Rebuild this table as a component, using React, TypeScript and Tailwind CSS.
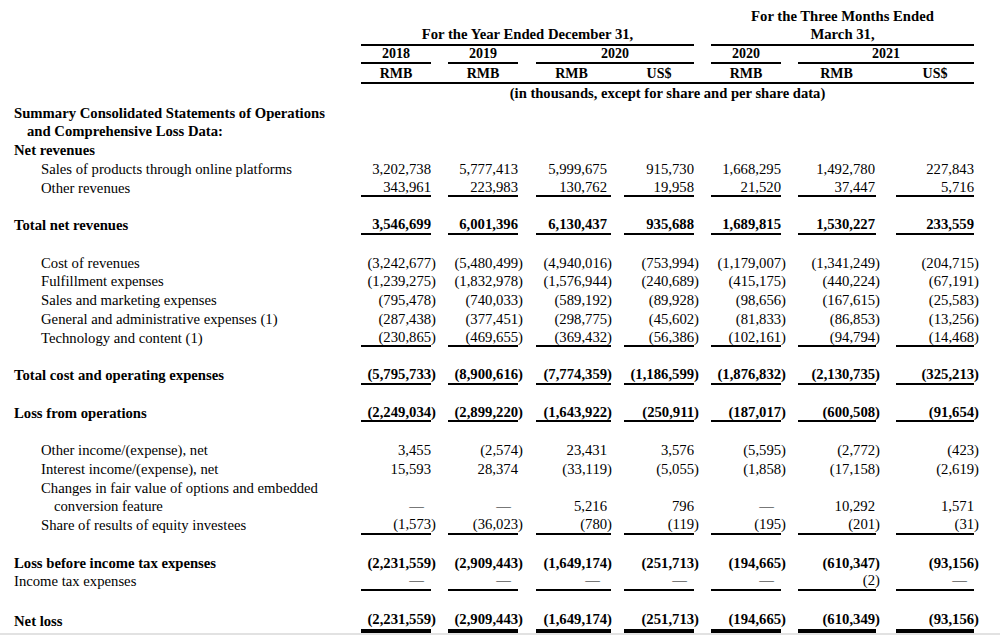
import React from "react";

type Row = {
  label: string;
  indent?: 0 | 1 | 2 | 3;
  bold?: boolean;
  values?: string[];
  line?: "single" | "thick";
};

// column widths / gaps measured off the underlines
const COLS = [
  "ml-0 w-[70px]",
  "ml-[17px] w-[70px]",
  "ml-[18px] w-[75px] pr-[4px]",
  "ml-[13px] w-[70px]",
  "ml-[17px] w-[70px]",
  "ml-[17px] w-[78px] pr-[1px]",
  "ml-[20px] w-[78px]",
];

const INDENT = ["pl-[14px]", "pl-[27px]", "pl-[41px]", "pl-[54px]"];

const ROWS: Row[] = [
  { label: "Summary Consolidated Statements of Operations", bold: true },
  { label: "and Comprehensive Loss Data:", indent: 1, bold: true },
  { label: "Net revenues", bold: true },
  {
    label: "Sales of products through online platforms",
    indent: 2,
    values: ["3,202,738", "5,777,413", "5,999,675", "915,730", "1,668,295", "1,492,780", "227,843"],
  },
  {
    label: "Other revenues",
    indent: 2,
    values: ["343,961", "223,983", "130,762", "19,958", "21,520", "37,447", "5,716"],
    line: "single",
  },
  { label: "" },
  {
    label: "Total net revenues",
    bold: true,
    values: ["3,546,699", "6,001,396", "6,130,437", "935,688", "1,689,815", "1,530,227", "233,559"],
    line: "single",
  },
  { label: "" },
  {
    label: "Cost of revenues",
    indent: 2,
    values: ["(3,242,677)", "(5,480,499)", "(4,940,016)", "(753,994)", "(1,179,007)", "(1,341,249)", "(204,715)"],
  },
  {
    label: "Fulfillment expenses",
    indent: 2,
    values: ["(1,239,275)", "(1,832,978)", "(1,576,944)", "(240,689)", "(415,175)", "(440,224)", "(67,191)"],
  },
  {
    label: "Sales and marketing expenses",
    indent: 2,
    values: ["(795,478)", "(740,033)", "(589,192)", "(89,928)", "(98,656)", "(167,615)", "(25,583)"],
  },
  {
    label: "General and administrative expenses (1)",
    indent: 2,
    values: ["(287,438)", "(377,451)", "(298,775)", "(45,602)", "(81,833)", "(86,853)", "(13,256)"],
  },
  {
    label: "Technology and content (1)",
    indent: 2,
    values: ["(230,865)", "(469,655)", "(369,432)", "(56,386)", "(102,161)", "(94,794)", "(14,468)"],
    line: "single",
  },
  { label: "" },
  {
    label: "Total cost and operating expenses",
    bold: true,
    values: ["(5,795,733)", "(8,900,616)", "(7,774,359)", "(1,186,599)", "(1,876,832)", "(2,130,735)", "(325,213)"],
    line: "single",
  },
  { label: "" },
  {
    label: "Loss from operations",
    bold: true,
    values: ["(2,249,034)", "(2,899,220)", "(1,643,922)", "(250,911)", "(187,017)", "(600,508)", "(91,654)"],
    line: "single",
  },
  { label: "" },
  {
    label: "Other income/(expense), net",
    indent: 2,
    values: ["3,455", "(2,574)", "23,431", "3,576", "(5,595)", "(2,772)", "(423)"],
  },
  {
    label: "Interest income/(expense), net",
    indent: 2,
    values: ["15,593", "28,374", "(33,119)", "(5,055)", "(1,858)", "(17,158)", "(2,619)"],
  },
  { label: "Changes in fair value of options and embedded", indent: 2 },
  {
    label: "conversion feature",
    indent: 3,
    values: ["—", "—", "5,216", "796", "—", "10,292", "1,571"],
  },
  {
    label: "Share of results of equity investees",
    indent: 2,
    values: ["(1,573)", "(36,023)", "(780)", "(119)", "(195)", "(201)", "(31)"],
    line: "single",
  },
  { label: "" },
  {
    label: "Loss before income tax expenses",
    bold: true,
    values: ["(2,231,559)", "(2,909,443)", "(1,649,174)", "(251,713)", "(194,665)", "(610,347)", "(93,156)"],
  },
  {
    label: "Income tax expenses",
    values: ["—", "—", "—", "—", "—", "(2)", "—"],
    line: "single",
  },
  { label: "" },
  {
    label: "Net loss",
    bold: true,
    values: ["(2,231,559)", "(2,909,443)", "(1,649,174)", "(251,713)", "(194,665)", "(610,349)", "(93,156)"],
    line: "thick",
  },
];

function Amount({ v }: { v: string }) {
  if (v === "—") return <span className="mr-[7px]">—</span>;
  if (v.startsWith("(")) {
    return (
      <span>
        {v.slice(0, -1)}
        <span className="-mr-[5px]">)</span>
      </span>
    );
  }
  return <span>{v}</span>;
}

function BodyRow({ row }: { row: Row }) {
  const h = row.line === "thick" ? "h-[23.5px]" : "h-[18.75px]";
  const border =
    row.line === "thick" ? "border-b-[4px] border-black" : row.line === "single" ? "border-b-2 border-black" : "";
  return (
    <div className={`flex ${h} ${row.bold ? "font-bold" : ""}`}>
      <div className={`flex w-[361px] shrink-0 items-center whitespace-nowrap ${INDENT[row.indent ?? 0]}`}>
        {row.label}
      </div>
      {row.values &&
        row.values.map((v, i) => (
          <div
            key={i}
            className={`box-border flex h-full shrink-0 items-center justify-end whitespace-nowrap ${COLS[i]} ${border}`}
          >
            <Amount v={v} />
          </div>
        ))}
    </div>
  );
}

export default function App() {
  return (
    <div
      className="relative min-h-[635px] w-[1000px] bg-white pt-[7px] text-black"
      style={{ fontFamily: '"Liberation Serif", "Times New Roman", serif' }}
    >
      {/* column headings */}
      <div className="font-bold">
        <div className="flex h-[19px] items-center text-[14.7px]">
          <div className="ml-[711px] w-[263px] text-center">For the Three Months Ended</div>
        </div>
        <div className="flex h-[19.5px] text-[14.7px]">
          <div className="ml-[361px] box-border flex w-[333px] items-center justify-center border-b-2 border-black pb-[2px]">
            For the Year Ended December 31,
          </div>
          <div className="ml-[17px] box-border flex w-[263px] items-center justify-center border-b-2 border-black pb-[2px]">
            March 31,
          </div>
        </div>
        <div className="flex h-[18.8px] text-[14px]">
          <div className="ml-[361px] box-border flex w-[70px] items-center justify-center border-b-2 border-black">2018</div>
          <div className="ml-[17px] box-border flex w-[70px] items-center justify-center border-b-2 border-black">2019</div>
          <div className="ml-[18px] box-border flex w-[158px] items-center justify-center border-b-2 border-black">2020</div>
          <div className="ml-[17px] box-border flex w-[70px] items-center justify-center border-b-2 border-black">2020</div>
          <div className="ml-[17px] box-border flex w-[176px] items-center justify-center border-b-2 border-black">2021</div>
        </div>
        <div className="flex h-[20px] text-[14px]">
          <div className="ml-[361px] box-border flex w-[613px] border-b-2 border-black">
            {["RMB", "RMB", "RMB", "US$", "RMB", "RMB", "US$"].map((c, i) => (
              <div key={i} className={`flex shrink-0 items-center justify-center ${COLS[i]}`}>
                {c}
              </div>
            ))}
          </div>
        </div>
        <div className="flex h-[19px] items-center text-[14.6px]">
          <div className="ml-[361px] w-[613px] text-center">(in thousands, except for share and per share data)</div>
        </div>
      </div>

      {/* statement lines */}
      <div className="text-[14.7px]">
        {ROWS.map((row, i) => (
          <BodyRow key={i} row={row} />
        ))}
      </div>

      <div className="h-[2px] w-full bg-[#e2e2e2]" />
    </div>
  );
}
